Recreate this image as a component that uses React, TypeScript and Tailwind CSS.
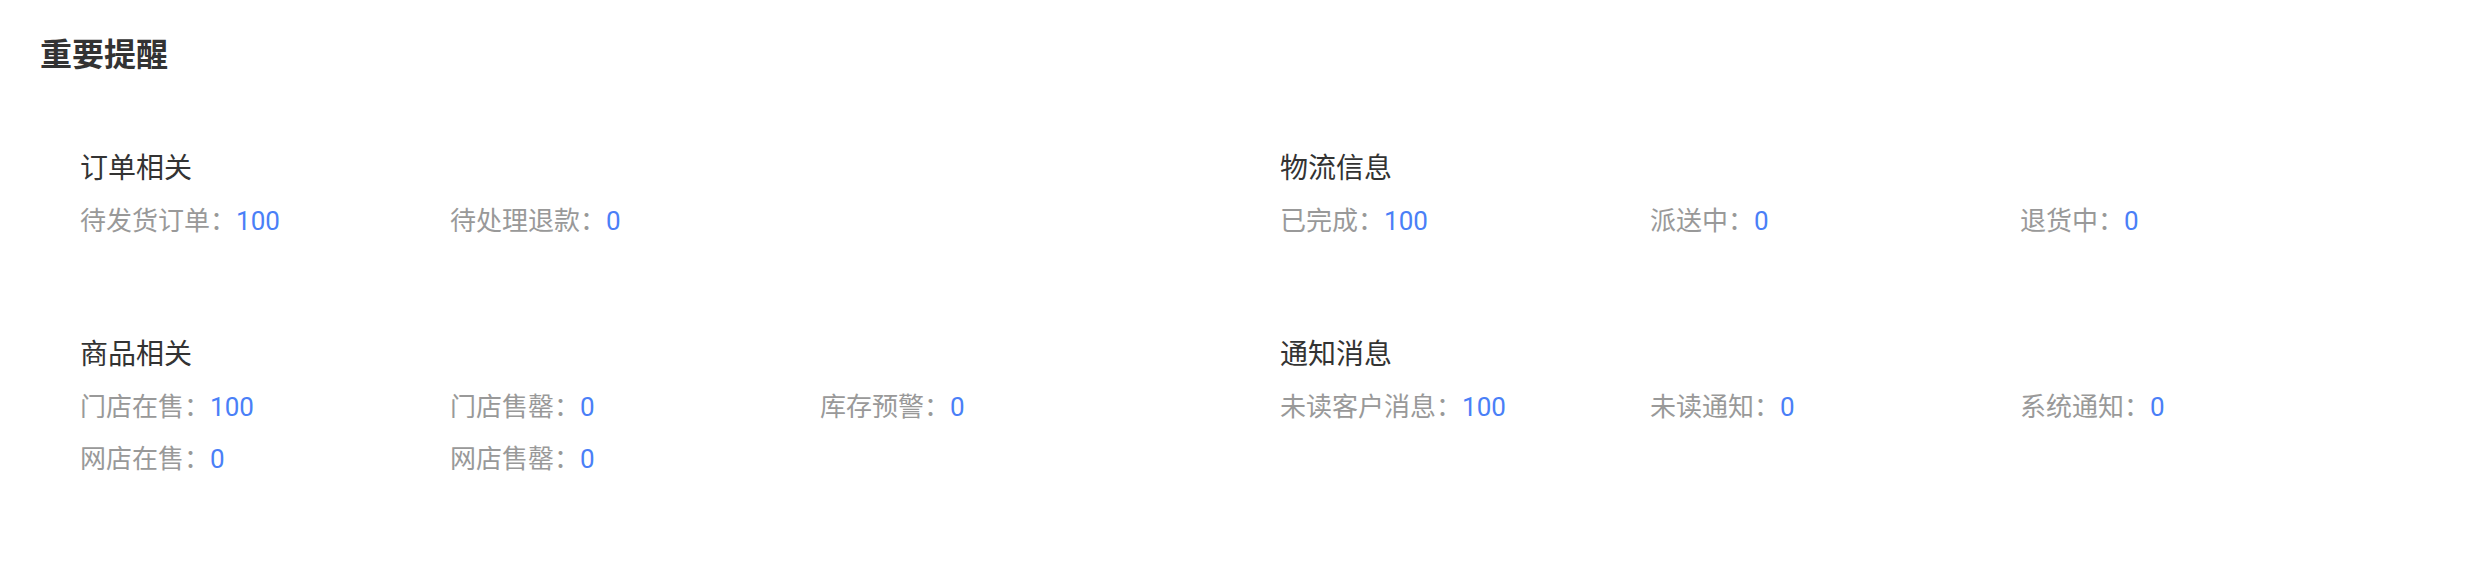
import React from "react";

type Item = { label: string; value: number };
type Section = { title: string; items: Item[] };

const sections: Section[] = [
  {
    title: "订单相关",
    items: [
      { label: "待发货订单", value: 100 },
      { label: "待处理退款", value: 0 },
    ],
  },
  {
    title: "物流信息",
    items: [
      { label: "已完成", value: 100 },
      { label: "派送中", value: 0 },
      { label: "退货中", value: 0 },
    ],
  },
  {
    title: "商品相关",
    items: [
      { label: "门店在售", value: 100 },
      { label: "门店售罄", value: 0 },
      { label: "库存预警", value: 0 },
      { label: "网店在售", value: 0 },
      { label: "网店售罄", value: 0 },
    ],
  },
  {
    title: "通知消息",
    items: [
      { label: "未读客户消息", value: 100 },
      { label: "未读通知", value: 0 },
      { label: "系统通知", value: 0 },
    ],
  },
];

const font = { fontFamily: 'Roboto, "Noto Sans CJK SC", sans-serif' };

const App: React.FC = () => {
  return (
    <div
      className="w-[2480px] h-[576px] bg-white px-10 pt-[33px] overflow-hidden"
      style={font}
    >
      <h2 className="text-[32px] leading-[44px] font-bold text-[#333333]">
        重要提醒
      </h2>

      <div className="grid grid-cols-2 mt-[72px] gap-y-[88px]">
        {sections.map((s) => (
          <div key={s.title} className="pl-10">
            <h3 className="text-[28px] leading-[40px] text-[#333333]">
              {s.title}
            </h3>
            <div className="mt-[6px] grid grid-cols-[repeat(3,370px)]">
              {s.items.map((it) => (
                <div
                  key={it.label}
                  className="text-[26px] leading-[52px] text-[#999999] whitespace-nowrap"
                >
                  {it.label}：<span className="text-[#4a7ff7]">{it.value}</span>
                </div>
              ))}
            </div>
          </div>
        ))}
      </div>
    </div>
  );
};

export default App;
